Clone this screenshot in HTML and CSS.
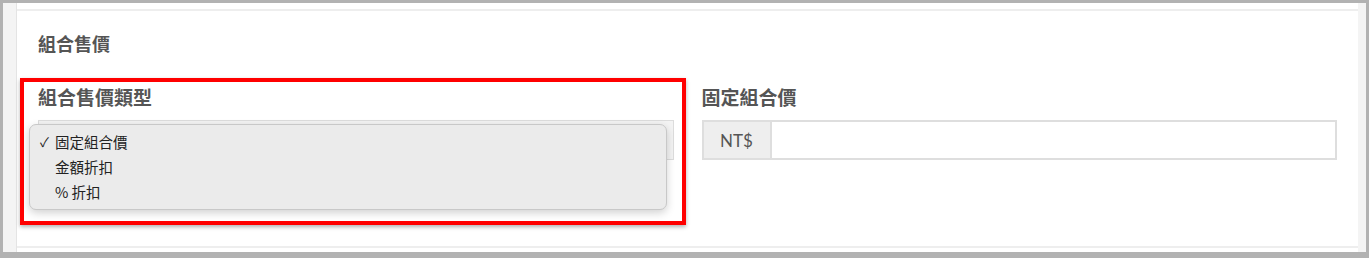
FILE: index.html
```html
<!DOCTYPE html>
<html lang="zh-Hant">
<head>
  <meta charset="UTF-8" />
  <meta name="viewport" content="width=device-width, initial-scale=1.0" />
  <title>組合售價</title>
  <link rel="stylesheet" href="styles.css">
</head>
<body>
  <div class="frame">
    <div class="panel">
      <div class="panel-body">
        <h3 class="section-title">組合售價</h3>
        <div class="fields">
          <div class="field field-type">
            <div class="highlight"></div>
            <label class="field-label">組合售價類型</label>
            <div class="select-box"></div>
            <ul class="dropdown">
              <li class="option selected"><span class="check">✓</span>固定組合價</li>
              <li class="option">金額折扣</li>
              <li class="option">% 折扣</li>
            </ul>
          </div>
          <div class="field">
            <label class="field-label">固定組合價</label>
            <div class="input-group">
              <span class="addon">NT$</span>
              <input class="price-input" type="text" />
            </div>
          </div>
        </div>
      </div>
    </div>
  </div>
</body>
</html>
```

FILE: styles.css
```css
body {
  margin: 0;
  background-color: #b2b2b2;
  font-family: "Lato", "Noto Sans CJK TC", sans-serif;
  color: #555;
}

.frame {
  display: flex;
  height: 249px;
  margin: 3px 3px 6px 3px;
  background-color: #f4f4f4;
}

.panel {
  flex: 1;
  margin-left: 13px;
  margin-right: 8px;
  padding-top: 6px;
  padding-bottom: 4px;
  background-color: #fff;
  border-left: 1px solid #e4e4e4;
}

.panel-body {
  height: 235px;
  padding: 0 21px;
  border-top: 2px solid #eee;
  border-bottom: 2px solid #eee;
}

.section-title {
  margin: 0;
  padding-top: 21px;
  font-size: 18px;
  line-height: 24px;
  font-weight: bold;
  color: #555;
}

.fields {
  display: grid;
  grid-template-columns: 1fr 1fr;
  gap: 28px;
  margin-top: 30px;
}

.field {
  position: relative;
}

.field-label {
  display: block;
  font-size: 19px;
  line-height: 24px;
  font-weight: bold;
  color: #555;
  margin-bottom: 10px;
}

.select-box {
  height: 40px;
  box-sizing: border-box;
  border: 1px solid #dcdcdc;
  background-color: #f3f3f3;
}

.highlight {
  position: absolute;
  left: -18px;
  right: -12px;
  top: -8px;
  height: 147px;
  box-sizing: border-box;
  border: 4px solid #ff0000;
  box-shadow: 0 2px 4px rgba(0, 0, 0, 0.3);
}

.dropdown {
  position: absolute;
  left: -9px;
  right: 7px;
  top: 38px;
  height: 86px;
  box-sizing: border-box;
  margin: 0;
  padding: 4px 0 0 0;
  list-style: none;
  background-color: #ebebeb;
  border: 1px solid #c8c8c8;
  border-radius: 7px;
  box-shadow: 0 3px 8px rgba(0, 0, 0, 0.18);
}

.option {
  position: relative;
  padding-left: 25px;
  font-family: "Noto Sans CJK TC", sans-serif;
  font-size: 14.5px;
  line-height: 25px;
  color: #222;
}

.check {
  position: absolute;
  left: 10px;
  font-size: 13px;
}

.input-group {
  display: flex;
  height: 40px;
  box-sizing: border-box;
  border: 2px solid #dedede;
}

.addon {
  width: 66px;
  display: flex;
  align-items: center;
  justify-content: center;
  background-color: #eee;
  border-right: 2px solid #dedede;
  font-size: 17px;
  color: #555;
}

.price-input {
  flex: 1;
  border: none;
  outline: none;
  background-color: #fff;
}
```
